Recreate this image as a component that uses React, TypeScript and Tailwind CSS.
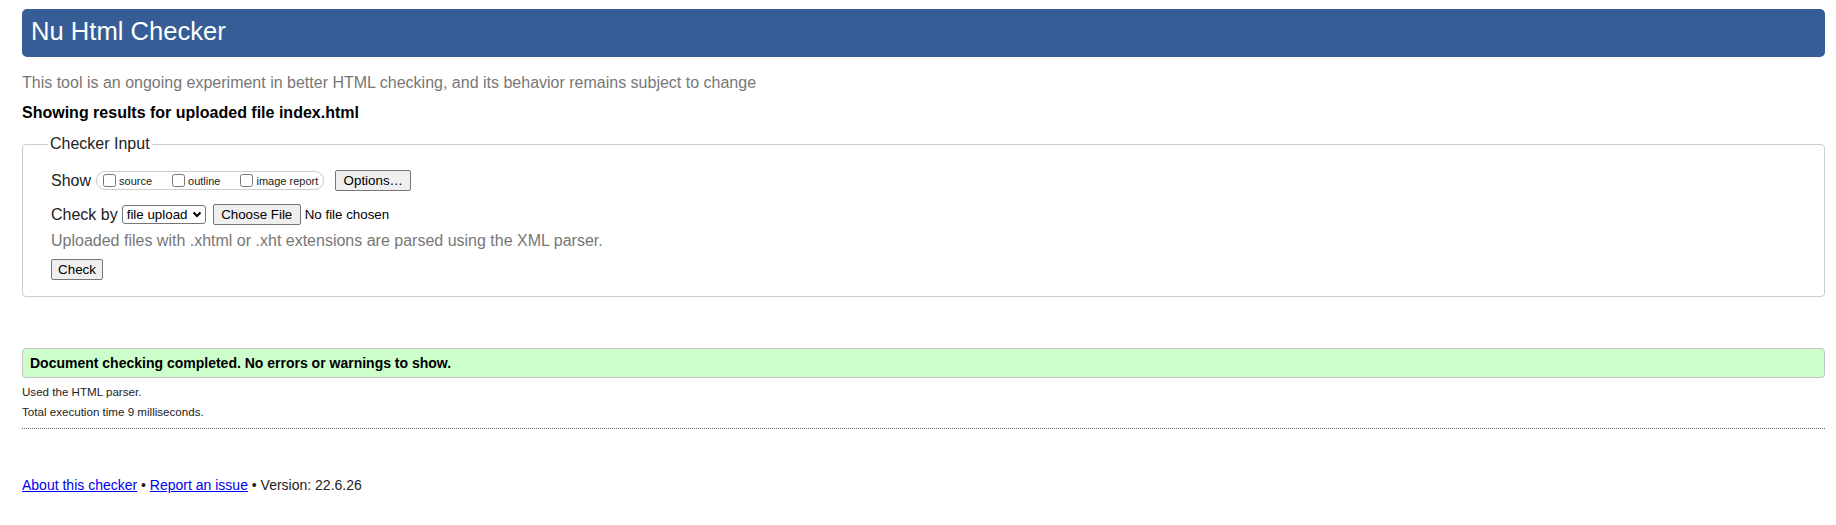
import { useState } from "react";

const FONT = { fontFamily: '"Liberation Sans", Arial, sans-serif' };

function Chevron() {
  return (
    <svg width="10" height="7" viewBox="0 0 10 7" className="ml-auto mr-[3px]">
      <polyline points="1.5,1.5 5,5 8.5,1.5" fill="none" stroke="#000" strokeWidth="2" />
    </svg>
  );
}

function ShowOptions() {
  const [opts, setOpts] = useState({ source: false, outline: false, image: false });

  return (
    <div className="ml-[5px] flex h-[19px] items-center rounded-[9px] border border-[#ccc] pl-[6px] pr-[5px]">
      <label className="flex items-center">
        <input
          type="checkbox"
          checked={opts.source}
          onChange={() => setOpts({ ...opts, source: !opts.source })}
          className="m-0 h-[13px] w-[13px]"
        />
        <span className="ml-[3px] mr-[20px] text-[11px]">source</span>
      </label>
      <label className="flex items-center">
        <input
          type="checkbox"
          checked={opts.outline}
          onChange={() => setOpts({ ...opts, outline: !opts.outline })}
          className="m-0 h-[13px] w-[13px]"
        />
        <span className="ml-[3px] mr-[20px] text-[11px]">outline</span>
      </label>
      <label className="flex items-center">
        <input
          type="checkbox"
          checked={opts.image}
          onChange={() => setOpts({ ...opts, image: !opts.image })}
          className="m-0 h-[13px] w-[13px]"
        />
        <span className="ml-[3px] text-[11px]">image report</span>
      </label>
    </div>
  );
}

export default function App() {
  return (
    <div style={FONT} className="bg-white pl-[22px] pr-[11px] pt-[9px] leading-[normal] text-[#222]">
      <h1 className="h-[48px] rounded-[5px] bg-[#365d95] pl-[9px] pt-[8px] text-[25.6px] font-normal text-white">
        Nu Html Checker
      </h1>

      <p className="mt-[17px] text-[16px] text-[#777]">
        This tool is an ongoing experiment in better HTML checking, and its behavior remains subject to change
      </p>

      <p className="mt-[12px] text-[16px] font-bold text-black">Showing results for uploaded file index.html</p>

      <fieldset className="mt-[13px] rounded-[4px] border border-[#ccc] pb-[16px] pl-[28px] pt-[17px]">
        <legend className="-ml-[3px] px-[2px] text-[16px] text-[#222]">Checker Input</legend>

        <div className="flex h-[21px] items-center text-[16px]">
          <span>Show</span>
          <ShowOptions />
          <button className="ml-[11px] h-[21px] w-[76px] rounded-[2px] border border-[#767676] bg-[#efefef] text-[13.333px] text-black">
            Options…
          </button>
        </div>

        <div className="mt-[13px] flex h-[21px] items-center text-[16px]">
          <span>Check by</span>
          <div className="ml-[4px] flex h-[19px] w-[84px] items-center rounded-[3px] border border-[#767676] bg-white pl-[4px] text-[13.333px] text-black">
            file upload
            <Chevron />
          </div>
          <button className="ml-[7px] h-[21px] w-[88px] rounded-[2px] border border-[#767676] bg-[#efefef] text-[13.333px] text-black">
            Choose File
          </button>
          <span className="ml-[4px] text-[13.333px] text-black">No file chosen</span>
        </div>

        <p className="mt-[7px] text-[16px] text-[#777]">
          Uploaded files with .xhtml or .xht extensions are parsed using the XML parser.
        </p>

        <button className="mt-[9px] h-[21px] w-[52px] rounded-[2px] border border-[#767676] bg-[#efefef] text-[13.333px] text-black">
          Check
        </button>
      </fieldset>

      <div className="mt-[51px] flex h-[30px] items-center rounded-[4px] border border-[#c4c4c4] bg-[#ccffcc] pl-[7px] text-[14px] font-bold text-black">
        Document checking completed. No errors or warnings to show.
      </div>

      <p className="mt-[7px] text-[11.6px]">Used the HTML parser.</p>
      <p className="mt-[7px] text-[11.6px]">Total execution time 9 milliseconds.</p>

      <hr className="mt-[10px] border-t border-dotted border-[#666]" />

      <p className="mt-[48px] text-[14px]">
        <a href="#" className="text-[#0000ee] underline">
          About this checker
        </a>
        {" • "}
        <a href="#" className="text-[#0000ee] underline">
          Report an issue
        </a>
        {" • Version: 22.6.26"}
      </p>
    </div>
  );
}
